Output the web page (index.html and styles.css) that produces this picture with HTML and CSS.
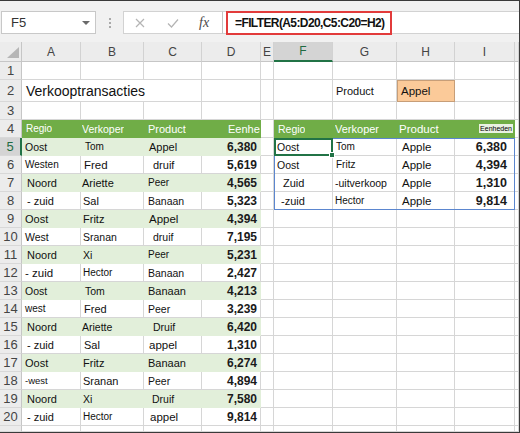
FILE: index.html
```html
<!DOCTYPE html>
<html lang="nl">
<head>
    <meta charset="UTF-8">
    <meta name="viewport" content="width=device-width, initial-scale=1.0">
    <title>FILTER - Verkooptransacties</title>
    <link rel="stylesheet" href="styles.css">
</head>
<body>
    <div class="window">
        <div class="formula-bar">
            <div class="name-box"><span>F5</span><span class="arrow"></span></div>
            <div class="grip"><i></i><i></i><i></i></div>
            <div class="fx-tools">
                <svg class="tool-cancel" width="10" height="10" viewBox="0 0 10 10"><path d="M1 1 L9 9 M9 1 L1 9" stroke="#b4b4b4" stroke-width="1.2" fill="none"/></svg>
                <svg class="tool-enter" width="12" height="10" viewBox="0 0 12 10"><path d="M1 5.5 L4.5 9 L11 1.5" stroke="#b4b4b4" stroke-width="1.2" fill="none"/></svg>
                <span class="fx">fx</span>
            </div>
            <div class="formula">
                <span class="formula-text">=FILTER(A5:D20,C5:C20=H2)</span>
            </div>
        </div>

        <div class="sheet" id="sheet">
            <div class="spill"></div>
            <div class="selection"><span class="handle"></span></div>
        </div>
    </div>

    <script>
        const sheet = document.getElementById('sheet');
        const cols = ['A', 'B', 'C', 'D', 'E', 'F', 'G', 'H', 'I', 'J'];
        const cells = {};

        // [tekst, lettergrootte, inspringing] ... eenheden
        const sales = [
            [['Oost', 10.5, 3], ['Tom', 10, 4], ['Appel', 11, 5], '6,380'],
            [['Westen', 10, 3], ['Fred', 11.5, 3], ['druif', 11, 9], '5,619'],
            [['Noord', 11, 5], ['Ariette', 11, 1], ['Peer', 10, 4], '4,565'],
            [['- zuid', 11, 5], ['Sal', 11, 2], ['Banaan', 10.5, 4], '5,323'],
            [['Oost', 11, 3], ['Fritz', 11, 2], ['Appel', 11.5, 5], '4,394'],
            [['West', 10.5, 3], ['Sranan', 10.5, 2], ['druif', 10.5, 9], '7,195'],
            [['Noord', 11, 5], ['Xi', 10.5, 2], ['Peer', 10, 4], '5,231'],
            [['- zuid', 11.5, 3], ['Hector', 10, 2], ['Banaan', 10.5, 4], '2,427'],
            [['Oost', 10.5, 3], ['Tom', 10.5, 4], ['Banaan', 11, 4], '4,213'],
            [['west', 10, 3], ['Fred', 11, 3], ['Peer', 10.5, 4], '3,239'],
            [['Noord', 11, 5], ['Ariette', 10.5, 1], ['Druif', 10.5, 9], '6,420'],
            [['- zuid', 11, 5], ['Sal', 11, 3], ['appel', 11.5, 5], '1,310'],
            [['Oost', 11, 3], ['Fritz', 11, 2], ['Banaan', 11, 4], '6,274'],
            [['-west', 9.5, 3], ['Sranan', 11, 2], ['Peer', 10.5, 4], '4,894'],
            [['Noord', 11, 5], ['Xi', 10.5, 2], ['Druif', 10.5, 8], '7,580'],
            [['- zuid', 11, 5], ['Hector', 10, 2], ['appel', 11.5, 6], '9,814']
        ];

        const result = [
            [['Oost', 10.5, 3], ['Tom', 10, 3], ['Apple', 11.5, 5], '6,380'],
            [['Oost', 10.5, 3], ['Fritz', 10, 3], ['Apple', 11.5, 5], '4,394'],
            [['Zuid', 11, 9], ['-uitverkoop', 10.5, 2], ['Apple', 11.5, 5], '1,310'],
            [['-zuid', 11, 7], ['Hector', 10, 2], ['Apple', 11.5, 5], '9,814']
        ];

        cells.A2 = { text: 'Verkooptransacties', cls: 'title', pad: 4, span: 3 };
        cells.G2 = { text: 'Product', size: 11, pad: 3 };
        cells.H2 = { text: 'Appel', size: 11.5, pad: 3, cls: 'criteria' };

        [['Regio', 10, 4], ['Verkoper', 10.5, 1], ['Product', 11, 4], ['Eenheden', 11, 26]].forEach((h, i) => {
            cells[cols[i] + 4] = { text: h[0], size: h[1], pad: h[2], cls: 'head' };
        });
        [['Regio', 10.5, 4], ['Verkoper', 11, 2], ['Product', 11.5, 2]].forEach((h, i) => {
            cells[cols[i + 5] + 4] = { text: h[0], size: h[1], pad: h[2], cls: 'head' };
        });
        cells.I4 = { text: 'Eenheden', cls: 'head tag' };

        sales.forEach((row, i) => {
            const r = i + 5;
            const band = r % 2 === 1 ? 'band' : '';
            row.slice(0, 3).forEach((c, j) => {
                cells[cols[j] + r] = { text: c[0], size: c[1], pad: c[2], cls: band };
            });
            cells['D' + r] = { text: row[3], cls: 'num ' + band };
        });

        result.forEach((row, i) => {
            const r = i + 5;
            row.slice(0, 3).forEach((c, j) => {
                cells[cols[j + 5] + r] = { text: c[0], size: c[1], pad: c[2] };
            });
            cells['I' + r] = { text: row[3], cls: 'num wide' };
        });

        function add(cls, text, row, col) {
            const el = document.createElement('div');
            el.className = cls;
            el.style.gridRow = row;
            el.style.gridColumn = col;
            if (text !== undefined && text !== '') {
                const span = document.createElement('span');
                span.textContent = text;
                el.appendChild(span);
            }
            sheet.appendChild(el);
            return el;
        }

        add('corner', '', 1, 1);
        cols.forEach((c, i) => {
            add('colhead' + (c === 'F' ? ' active' : ''), c === 'J' ? '' : c, 1, i + 2);
        });

        for (let r = 1; r <= 21; r++) {
            add('rowhead' + (r === 5 ? ' active' : ''), r < 21 ? String(r) : '', r + 1, 1);
            for (let i = 0; i < cols.length; i++) {
                const c = cells[cols[i] + r];
                if (!c) {
                    add('cell', '', r + 1, i + 2);
                    continue;
                }
                const span = c.span || 1;
                const el = add('cell ' + (c.cls || ''), c.text, r + 1, (i + 2) + ' / span ' + span);
                if (c.size) el.style.fontSize = c.size + 'px';
                if (c.pad) el.style.paddingLeft = c.pad + 'px';
                i += span - 1;
            }
        }

        // overlays komen als laatste zodat ze boven de cellen liggen
        sheet.appendChild(document.querySelector('.spill'));
        sheet.appendChild(document.querySelector('.selection'));
    </script>
</body>
</html>
```

FILE: styles.css
```css
* {
    box-sizing: border-box;
}

body {
    margin: 0;
    background-color: #fff;
    font-family: "Liberation Sans", Arial, sans-serif;
}

.window {
    width: 520px;
    height: 433px;
    border: 1px solid #3a3a3a;
    border-left: 0;
    background-color: #f1f1f1;
    display: flex;
    flex-direction: column;
    overflow: hidden;
}

/* formulebalk */
.formula-bar {
    height: 41px;
    flex-shrink: 0;
    display: flex;
    align-items: flex-start;
    padding: 10px 0 0 1px;
}

.name-box {
    width: 95px;
    height: 23px;
    background-color: #fff;
    border: 1px solid #c8c8c8;
    display: flex;
    align-items: center;
    justify-content: space-between;
    padding: 0 5px 0 9px;
    font-size: 13px;
    color: #333;
}

.name-box .arrow {
    border-left: 4px solid transparent;
    border-right: 4px solid transparent;
    border-top: 4px solid #6a6a6a;
}

.grip {
    width: 27px;
    height: 23px;
    display: flex;
    flex-direction: column;
    align-items: center;
    justify-content: center;
    gap: 2px;
}

.grip i {
    width: 2px;
    height: 2px;
    background-color: #a9a9a9;
}

.fx-tools {
    width: 100px;
    height: 23px;
    background-color: #fff;
    border: 1px solid #d2d2d2;
    border-right-color: #c4c4c4;
    display: flex;
    align-items: center;
}

.tool-cancel {
    margin-left: 11px;
}

.tool-enter {
    margin-left: 22px;
}

.fx {
    margin-left: 20px;
    font-family: "Liberation Serif", serif;
    font-style: italic;
    font-size: 14px;
    color: #4a4a4a;
}

.formula {
    flex: 1;
    height: 23px;
    background-color: #fff;
    border: 1px solid #d2d2d2;
    border-left: 0;
    border-right: 0;
    padding-left: 3px;
}

.formula-text {
    display: inline-flex;
    align-items: center;
    width: 166px;
    height: 24px;
    margin-top: -1px;
    padding-left: 7px;
    border: 2px solid #e23b3b;
    font-weight: bold;
    font-size: 12px;
    letter-spacing: -0.6px;
    color: #111;
}

/* werkblad */
.sheet {
    flex: 1;
    display: grid;
    grid-template-columns: 22px 59px 63px 58px 59px 13px 59px 64px 58px 60px 1fr;
    grid-template-rows: 20px 18px 22px repeat(18, 18px) 1fr;
    background-color: #fff;
    overflow: hidden;
}

.corner,
.colhead,
.rowhead {
    background-color: #ececec;
    color: #444;
    display: flex;
    align-items: center;
    justify-content: center;
}

.corner {
    position: relative;
    border-right: 1px solid #c6c6c6;
    border-bottom: 1px solid #c6c6c6;
}

.corner::after {
    content: "";
    position: absolute;
    right: 2px;
    bottom: 3px;
    border-left: 12px solid transparent;
    border-bottom: 11px solid #b6b6b6;
}

.colhead {
    font-size: 12px;
    border-right: 1px solid #d2d2d2;
    border-bottom: 1px solid #c6c6c6;
}

.rowhead {
    font-size: 13px;
    border-right: 1px solid #c6c6c6;
    border-bottom: 1px solid #d8d8d8;
}

.colhead.active {
    background-color: #d4d4d4;
    color: #1f6b42;
    border-bottom: 2px solid #217346;
}

.rowhead.active {
    background-color: #d4d4d4;
    color: #1f6b42;
    border-right: 2px solid #217346;
}

.cell {
    min-width: 0;
    display: flex;
    align-items: center;
    white-space: nowrap;
    border-right: 1px solid #d6d6d6;
    border-bottom: 1px solid #d6d6d6;
    font-size: 11px;
    color: #111;
}

.cell.title {
    font-size: 14px;
}

.cell.criteria {
    background-color: #fbca99;
    border: 1px solid #c79e78;
}

.cell.head {
    background-color: #70ad47;
    border-color: #70ad47;
    color: #fff;
}

.cell.head span {
    overflow: hidden;
}

.cell.band {
    background-color: #e2efda;
    border-color: #e2efda;
}

.cell.num {
    justify-content: flex-end;
    padding-right: 3px;
    font-size: 12px;
    font-weight: bold;
    color: #1a1a1a;
}

.cell.num.wide {
    padding-right: 7px;
    font-size: 12.5px;
}

.cell.tag {
    justify-content: flex-end;
    padding-right: 1px;
}

.cell.tag span {
    background-color: #e9f1e3;
    color: #000;
    font-size: 7px;
    line-height: 9px;
    padding: 0 1px;
}

/* overgelopen resultaat en actieve cel */
.spill {
    grid-row: 6 / 10;
    grid-column: 7 / 11;
    border: 1px solid #5b86cf;
    pointer-events: none;
}

.selection {
    grid-row: 6;
    grid-column: 7;
    position: relative;
    border: 2px solid #217346;
    pointer-events: none;
}

.selection .handle {
    position: absolute;
    right: -4px;
    bottom: -4px;
    width: 6px;
    height: 6px;
    background-color: #217346;
    border: 1px solid #fff;
}
```
